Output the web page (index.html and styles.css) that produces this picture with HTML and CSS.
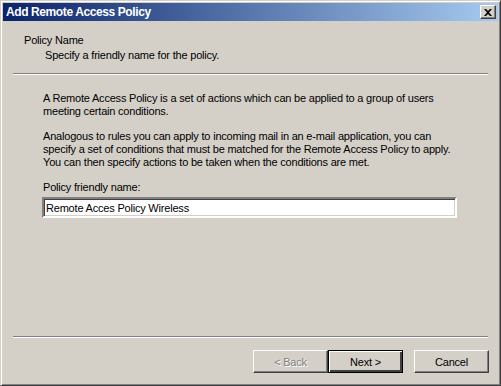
FILE: index.html
```html
<!DOCTYPE html>
<html lang="en">
<head>
<meta charset="UTF-8">
<title>Add Remote Access Policy</title>
<link rel="stylesheet" href="styles.css">
</head>
<body>

<div class="window">
  <div class="titlebar">
    <span class="titlebar__text">Add Remote Access Policy</span>
    <span class="titlebar__close">
      <svg width="8" height="7" viewBox="0 0 8 7"><path d="M0 0h2l2 2 2-2h2L5 3.5 8 7H6L4 5 2 7H0l3-3.5z" fill="#000"/></svg>
    </span>
  </div>

  <div class="header">
    <div class="header__title">Policy Name</div>
    <div class="header__sub">Specify a friendly name for the policy.</div>
  </div>

  <div class="sep"></div>

  <div class="content">
    <p>A Remote Access Policy is a set of actions which can be applied to a group of users<br>meeting certain conditions.</p>
    <p>Analogous to rules you can apply to incoming mail in an e-mail application, you can<br>specify a set of conditions that must be matched for the Remote Access Policy to apply.<br>You can then specify actions to be taken when the conditions are met.</p>
    <label class="field-label" for="policyName">Policy friendly name:</label>
    <input class="field" type="text" id="policyName" value="Remote Acces Policy Wireless">
  </div>

  <div class="sep sep--bottom"></div>

  <div class="buttons">
    <button class="btn" disabled>&lt; Back</button>
    <button class="btn btn--default">Next &gt;</button>
    <button class="btn btn--cancel">Cancel</button>
  </div>
</div>

</body>
</html>
```

FILE: styles.css
```css
body {
  margin: 0;
  font-family: "Liberation Sans", Arial, sans-serif;
  font-size: 11px;
  letter-spacing: -0.2px;
  color: #000;
}

.window {
  box-sizing: border-box;
  width: 501px;
  height: 386px;
  background: #d4d0c8;
  border: 1px solid;
  border-color: #d4d0c8 #404040 #404040 #d4d0c8;
  box-shadow: inset 1px 1px 0 #fff, inset -1px -1px 0 #808080;
  padding: 2px;
  display: flex;
  flex-direction: column;
}

.titlebar {
  height: 18px;
  background: linear-gradient(to right, #0a246a, #a6caf0);
  display: flex;
  align-items: center;
  justify-content: space-between;
  padding: 0 2px 0 3px;
}

.titlebar__text {
  color: #fff;
  font-weight: bold;
  font-size: 12px;
  letter-spacing: -0.4px;
}

.titlebar__close {
  box-sizing: border-box;
  width: 16px;
  height: 14px;
  background: #d4d0c8;
  border: 1px solid;
  border-color: #fff #404040 #404040 #fff;
  box-shadow: inset -1px -1px 0 #808080;
  display: flex;
  align-items: center;
  justify-content: center;
}

.header {
  padding: 13px 0 0 21px;
  height: 39px;
}

.header__title {
  line-height: 13px;
}

.header__sub {
  line-height: 13px;
  margin-top: 2px;
  padding-left: 21px;
}

.sep {
  margin: 0 10px;
  height: 1px;
  background: #808080;
  border-bottom: 1px solid #fff;
}

.content {
  flex: 1;
  padding: 17px 0 0 40px;
}

.content p {
  margin: 0 0 12px;
  line-height: 13px;
}

.field-label {
  display: block;
  line-height: 13px;
  margin-bottom: 3px;
}

.field {
  box-sizing: border-box;
  width: 415px;
  height: 21px;
  margin: 0 0 0 -1px;
  padding: 0 2px;
  font: inherit;
  letter-spacing: -0.2px;
  background: #fff;
  border: 2px solid;
  border-color: #808080 #fff #fff #808080;
  box-shadow: inset 1px 1px 0 #404040, inset -1px -1px 0 #d4d0c8;
  outline: none;
}

.sep--bottom {
  margin-bottom: 12px;
}

.buttons {
  display: flex;
  justify-content: flex-end;
  padding: 0 9px 10px 0;
}

.btn {
  box-sizing: border-box;
  width: 75px;
  height: 23px;
  margin: 0;
  padding: 0;
  font: inherit;
  font-weight: normal;
  letter-spacing: -0.2px;
  color: #000;
  background: #d4d0c8;
  border: 1px solid;
  border-color: #fff #404040 #404040 #fff;
  box-shadow: inset -1px -1px 0 #808080;
}

.btn:disabled {
  color: #808080;
  text-shadow: 1px 1px 0 #fff;
}

.btn--default {
  border: 1px solid #000;
  box-shadow: inset 1px 1px 0 #fff, inset -2px -2px 0 #404040, inset -1px -1px 0 #808080;
}

.btn--cancel {
  margin-left: 11px;
}
```
